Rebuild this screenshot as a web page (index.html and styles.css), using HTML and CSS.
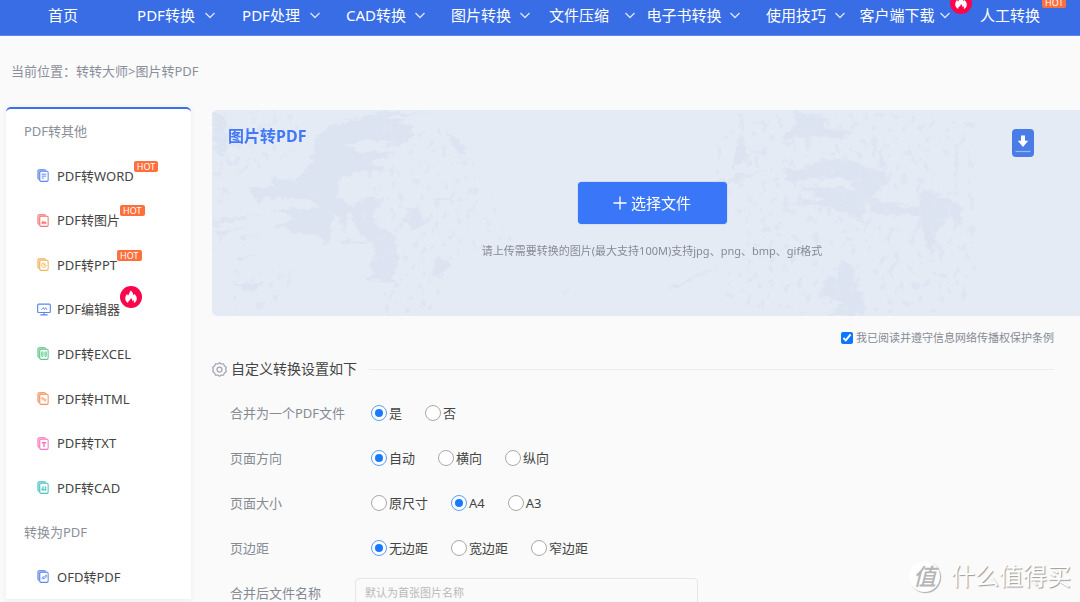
FILE: index.html
```html
<!DOCTYPE html>
<html lang="zh-CN">
<head>
<meta charset="utf-8">
<meta name="viewport" content="width=device-width, initial-scale=1">
<title>图片转PDF - 转转大师</title>
<link rel="stylesheet" href="styles.css">
</head>
<body>
<svg class="defs" aria-hidden="true">
  <symbol id="chevron" viewBox="0 0 12 12"><path d="M1.500 4 6 8.500 10.500 4" fill="none" stroke="currentColor" stroke-width="1.300"/></symbol>
  <symbol id="flame" viewBox="0 0 22 22">
    <circle cx="11" cy="11" r="11" fill="#f9064b"/>
    <path d="M8.200 17C6 15.800 4.800 13.800 5.300 11.200c.3-1.300.9-2.300 1.700-3.200.5.600.8 1.100.9 1.800C9 8.500 9.300 6.500 10.800 4.500c1.600 1 2.400 2.700 2.300 4.800.5-.3.800-.8 1-1.500 1.900 1.500 3 3.500 2.600 5.700-.3 1.700-1.400 2.900-3 3.500.5-1.200.2-2.200-.6-3-.1.700-.4 1-.8 1.200.1-1.400-.3-2.400-1.400-3.200.1 1.600-1.700 2.300-2.500 3.500-.3.600-.3 1-.2 1.500z" fill="#fff"/>
  </symbol>
  <symbol id="pages" viewBox="0 0 36 40">
    <path d="M7 32H6a4 4 0 0 1-4-4V6a4 4 0 0 1 4-4h17a4 4 0 0 1 4 4" fill="currentColor" fill-opacity=".5" stroke="currentColor" stroke-width="3"/>
    <rect x="8" y="7" width="26" height="31" rx="4" fill="#fff" stroke="currentColor" stroke-width="3.500"/>
  </symbol>
</svg>

<nav class="nav">
  <a class="nav-item nav-home" href="#"><span class="nav-label">首页</span></a>
  <a class="nav-item" href="#"><span class="nav-label">PDF转换</span><svg class="chevron"><use href="#chevron"/></svg></a>
  <a class="nav-item" href="#"><span class="nav-label">PDF处理</span><svg class="chevron"><use href="#chevron"/></svg></a>
  <a class="nav-item" href="#"><span class="nav-label">CAD转换</span><svg class="chevron"><use href="#chevron"/></svg></a>
  <a class="nav-item" href="#"><span class="nav-label">图片转换</span><svg class="chevron"><use href="#chevron"/></svg></a>
  <a class="nav-item nav-early" href="#"><span class="nav-label">文件压缩</span><svg class="chevron"><use href="#chevron"/></svg></a>
  <a class="nav-item nav-early" href="#"><span class="nav-label">电子书转换</span><svg class="chevron"><use href="#chevron"/></svg></a>
  <a class="nav-item" href="#"><span class="nav-label">使用技巧</span><svg class="chevron"><use href="#chevron"/></svg></a>
  <a class="nav-item nav-client" href="#"><span class="nav-label">客户端下载</span><svg class="chevron"><use href="#chevron"/></svg><svg class="nav-flame"><use href="#flame"/></svg></a>
  <a class="nav-item nav-last" href="#"><span class="nav-label">人工转换<span class="hot nav-hot">HOT</span></span></a>
</nav>

<div class="crumbs">当前位置：<a href="#">转转大师</a>&gt;<a href="#">图片转PDF</a></div>

<div class="layout">
  <aside class="sidebar">
    <h2 class="side-title">PDF转其他</h2>
    <a class="side-item" href="#"><svg class="side-icon c-blue" viewBox="0 0 36 40"><use href="#pages"/><path d="M14 16h14M14 22h14M14 28h7" stroke="currentColor" stroke-width="3"/></svg><span class="side-label">PDF转WORD<span class="hot side-hot">HOT</span></span></a>
    <a class="side-item" href="#"><svg class="side-icon c-red" viewBox="0 0 36 40"><use href="#pages"/><path d="M13 30v-3l5-7 4 5 3-3 4 5v3z" fill="currentColor"/></svg><span class="side-label">PDF转图片<span class="hot side-hot">HOT</span></span></a>
    <a class="side-item" href="#"><svg class="side-icon c-amber" viewBox="0 0 36 40"><use href="#pages"/><path d="M20.500 15a7 7 0 1 0 7 7h-7zM20.500 22l5-5" fill="none" stroke="currentColor" stroke-width="2.500"/></svg><span class="side-label">PDF转PPT<span class="hot side-hot">HOT</span></span></a>
    <a class="side-item" href="#"><svg class="side-icon side-screen c-blue" viewBox="0 0 42 38"><rect x="2" y="3" width="38" height="25" rx="3" fill="none" stroke="currentColor" stroke-width="3.500"/><path d="M21 28v6M10 35h22" stroke="currentColor" stroke-width="3.500"/><path d="m13 20 6-7 2 5M22 20l4-7 4 7" fill="none" stroke="currentColor" stroke-width="2.500"/></svg><span class="side-label">PDF编辑器<svg class="side-flame"><use href="#flame"/></svg></span></a>
    <a class="side-item" href="#"><svg class="side-icon c-green" viewBox="0 0 36 40"><use href="#pages"/><path d="M14 15h4v14h-4zM24 15h4v14h-4zM14 22h4M24 22h4" fill="none" stroke="currentColor" stroke-width="2.500"/></svg><span class="side-label">PDF转EXCEL</span></a>
    <a class="side-item" href="#"><svg class="side-icon c-orange" viewBox="0 0 36 40"><use href="#pages"/><path d="m19 20-3-4-3 3 4 5 3-2M21 22l3-2 4 5-3 3-4-3M17 19l7 7" fill="none" stroke="currentColor" stroke-width="2.500"/></svg><span class="side-label">PDF转HTML</span></a>
    <a class="side-item" href="#"><svg class="side-icon c-pink" viewBox="0 0 36 40"><use href="#pages"/><path d="M14 18h14M21 18v13" stroke="currentColor" stroke-width="4.500"/></svg><span class="side-label">PDF转TXT</span></a>
    <a class="side-item" href="#"><svg class="side-icon c-teal" viewBox="0 0 36 40"><use href="#pages"/><path d="M13 27h16M18 16v14M25 16v14M18 20l-5 7M25 21h4" fill="none" stroke="currentColor" stroke-width="3"/></svg><span class="side-label">PDF转CAD</span></a>
    <h2 class="side-title">转换为PDF</h2>
    <a class="side-item" href="#"><svg class="side-icon c-blue" viewBox="0 0 36 40"><use href="#pages"/><path d="m14 28 5-8v8l9-6v-7l-6 7" fill="none" stroke="currentColor" stroke-width="2.500"/></svg><span class="side-label">OFD转PDF</span></a>
  </aside>

  <main class="main">
    <section class="upload">
      <svg class="texture" viewBox="0 0 2604 618" preserveAspectRatio="xMinYMin slice" aria-hidden="true">
        <defs>
          <filter id="rough" x="-5%" y="-5%" width="110%" height="110%">
            <feTurbulence type="fractalNoise" baseFrequency=".03 .06" numOctaves="4" seed="4" result="n"/>
            <feDisplacementMap in="SourceGraphic" in2="n" scale="34" xChannelSelector="R" yChannelSelector="G"/>
          </filter>
          <filter id="speckle" x="0" y="0" width="100%" height="100%">
            <feTurbulence type="fractalNoise" baseFrequency=".045 .035" numOctaves="4" seed="9" result="n"/>
            <feColorMatrix in="n" type="matrix" values="0 0 0 0 0  0 0 0 0 0  0 0 0 0 0  14 0 0 0 -8.600" result="t"/>
            <feComposite in="SourceGraphic" in2="t" operator="in"/>
          </filter>
        </defs>
        <g fill="#dde4f1" filter="url(#rough)">
          <g transform="translate(-21 -30)">
            <path d="M330 110 380 75 520 50 625 70 620 110 580 140 560 125 480 120 415 135 470 160 570 155 490 190 555 205 450 220 410 230 400 250 400 290 440 320 480 290 520 290 500 370 560 400 580 470 560 550 490 540 510 470 500 430 460 400 430 330 420 400 400 350 385 345 365 440 335 400 280 400 205 380 270 355 200 330 340 320 330 300 180 290 170 310 140 290 130 260 200 260 200 235 270 240 320 190z"/>
            <path d="M22 30 60 50 70 130 50 180 22 120zM22 362l150-22-70 20-80 12zM22 402l110-24-90 28zM95 410l70-10-60 18zM80 545l100 10-60 20zM100 470l60-8-50 16zM410 424l80-3-10 8-70 2zM1065 580l40-22-30 24zM440 50l230-18-60 12-150 18z"/>
            <path d="m610 320 30 10 20 40-40 20-20-30zM720 90l50 40 20 30-40-10zM690 470l40 20-30 50-15-20zM680 290l100 15-90-4z"/>
          </g>
          <g transform="translate(1284 -30)">
            <path d="M430 200 470 210 520 195 540 180 630 180 680 210 740 215 735 260 690 290 750 310 830 320 850 270 960 310 970 380 920 350 890 400 875 480 850 400 840 345 760 345 700 340 680 300 665 380 640 345 560 320 420 310 560 300 480 260 640 265 640 240 480 235 460 250 440 240z"/>
            <path d="M600 480 640 500 650 560 670 600 670 645 560 645 610 610 545 590 550 540 600 530zM420 110 470 70 460 35 560 50 550 80 640 90 600 120 520 100 430 125zM240 240l140-30-120 45zM300 110l30 60-60 40zM80 570l190-90-160 85zM725 120l12 90-20-10z"/>
          </g>
        </g>
        <g fill="#dfe5f2" filter="url(#speckle)">
          <path d="M0 0h260v130L60 200 0 560zM440 280l80-250 180 20 140 180 60 160-170 80-80 140H520zM60 480h200l-40 130H60zM1500 140l60-130h530l200 30v570h-600l-180-60 100-160-100-180z"/>
        </g>
      </svg>
      <h1 class="upload-title">图片转PDF</h1>
      <a class="download" href="#" aria-label="下载"><svg viewBox="0 0 22 28"><rect width="22" height="28" rx="4" fill="#4a7ce8"/><path d="M9 6.500h4v5.300h3.200L11 18l-5.200-6.200H9z" fill="#fff"/><path d="M3.500 22.500h15" stroke="#9bb7f3" stroke-width="1.200"/></svg></a>
      <div class="upload-body">
        <button class="pick" type="button"><svg viewBox="0 0 14 14"><path d="M7 .5v13M.5 7h13" stroke="#fff" stroke-width="1.300"/></svg>选择文件</button>
        <p class="hint">请上传需要转换的图片(最大支持100M)支持jpg、png、bmp、gif格式</p>
      </div>
    </section>

    <label class="agree"><input type="checkbox" checked>我已阅读并遵守信息网络传播权保护条例</label>

    <form class="settings">
      <h2 class="settings-title">
        <svg viewBox="0 0 30 30"><path d="M15 1.500 18.500 4 23 3.700 24.800 7.800 28.500 10.500 27.500 15 28.500 19.500 24.800 22.200 23 26.300 18.500 26 15 28.500 11.500 26 7 26.300 5.200 22.200 1.500 19.500 2.500 15 1.500 10.500 5.200 7.800 7 3.700 11.500 4z" fill="none" stroke="#a3a6b0" stroke-width="2.500" stroke-linejoin="round"/><circle cx="15" cy="15" r="5" fill="none" stroke="#a3a6b0" stroke-width="2.500"/></svg>
        <span>自定义转换设置如下</span>
      </h2>
      <div class="row" role="radiogroup" aria-labelledby="l-merge">
        <span class="row-label" id="l-merge">合并为一个PDF文件</span>
        <label class="option"><input type="radio" name="merge" checked>是</label>
        <label class="option"><input type="radio" name="merge">否</label>
      </div>
      <div class="row" role="radiogroup" aria-labelledby="l-dir">
        <span class="row-label" id="l-dir">页面方向</span>
        <label class="option"><input type="radio" name="dir" checked>自动</label>
        <label class="option"><input type="radio" name="dir">横向</label>
        <label class="option"><input type="radio" name="dir">纵向</label>
      </div>
      <div class="row" role="radiogroup" aria-labelledby="l-size">
        <span class="row-label" id="l-size">页面大小</span>
        <label class="option"><input type="radio" name="size">原尺寸</label>
        <label class="option"><input type="radio" name="size" checked>A4</label>
        <label class="option"><input type="radio" name="size">A3</label>
      </div>
      <div class="row" role="radiogroup" aria-labelledby="l-margin">
        <span class="row-label" id="l-margin">页边距</span>
        <label class="option"><input type="radio" name="margin" checked>无边距</label>
        <label class="option"><input type="radio" name="margin">宽边距</label>
        <label class="option"><input type="radio" name="margin">窄边距</label>
      </div>
      <div class="row row-name">
        <label class="row-label" for="filename">合并后文件名称</label>
        <input class="filename" id="filename" type="text" placeholder="默认为首张图片名称">
      </div>
    </form>
  </main>
</div>

<div class="watermark"><span class="watermark-seal">值</span><span>什么值得买</span></div>
</body>
</html>
```

FILE: styles.css
```css
* { box-sizing: border-box; }

body {
  margin: 0;
  height: 100vh;
  overflow: hidden;
  position: relative;
  background: #fafafa;
  color: #444;
  font-family: "Noto Sans", "Noto Sans CJK SC", sans-serif;
  font-size: 13px;
  line-height: 18px;
}

a { color: inherit; text-decoration: none; }
h1, h2, p { margin: 0; font-weight: 400; }
.defs { position: absolute; width: 0; height: 0; }

/* top navigation */
.nav {
  display: grid;
  grid-template-columns: 113px repeat(8, 105px) 1fr;
  height: 36px;
  padding-bottom: 6px;
  background: #386de6;
  border-bottom: 1px solid #5c88ee;
  color: #fff;
  font-size: 15px;
}
.nav-item {
  position: relative;
  display: flex;
  align-items: center;
  padding: 0 2px 0 15px;
}
.nav-label {
  position: relative;
  flex: 1;
  min-width: 0;
  display: flex;
  justify-content: center;
  white-space: nowrap;
}
.nav-early .nav-label { padding-right: 14px; }
.nav-client .nav-label { padding-right: 8px; }
.nav-last .nav-label { flex: none; }
.nav-last { padding-left: 27px; }
.chevron { flex: none; width: 12px; height: 12px; color: #dbe6ff; }
.nav-flame {
  position: absolute;
  right: -19px;
  top: -8px;
  width: 22px;
  height: 22px;
}

.hot {
  position: absolute;
  left: 100%;
  padding: 0 3px;
  border-radius: 2px;
  background: #ff6f3c;
  color: #fff;
  font-size: 9px;
  line-height: 11px;
}
.nav-hot { top: -9px; margin-left: 2px; }

.crumbs {
  padding: 26px 11px 27px;
  color: #8b8f9a;
}

/* page columns */
.layout {
  display: grid;
  grid-template-columns: 185px minmax(0, 1fr);
  column-gap: 21px;
  align-items: start;
  padding-left: 6px;
}

.sidebar {
  display: grid;
  grid-auto-rows: 1fr;
  min-height: 493px;
  border-top: 2px solid #3a70ea;
  border-bottom: 1px solid #eef2fa;
  border-radius: 5px 5px 0 0;
  background: #fff;
  box-shadow: 0 0 5px rgba(60, 80, 120, .08);
}
.side-title {
  display: flex;
  align-items: center;
  padding-left: 18px;
  color: #8b8f9a;
  font-size: 13px;
}
.side-item {
  display: grid;
  grid-template-columns: 20px max-content;
  align-items: center;
  padding-left: 31px;
}
.side-label { position: relative; }
.side-icon { width: 12px; height: 13px; }
.side-screen { width: 14px; }
.side-hot { top: -6px; }
.side-flame {
  position: absolute;
  left: 100%;
  top: -14px;
  width: 22px;
  height: 22px;
}

.c-blue { color: #5c88ec; }
.c-red { color: #f77777; }
.c-amber { color: #f3b35a; }
.c-green { color: #5fc88c; }
.c-orange { color: #f3935f; }
.c-pink { color: #fb78bf; }
.c-teal { color: #4cc5c1; }

/* upload panel */
.upload {
  position: relative;
  min-height: 206px;
  margin-top: 3px;
  padding: 16px;
  border-radius: 5px 0 0 5px;
  overflow: hidden;
  background: #e4ebf4;
}
.texture {
  position: absolute;
  inset: 0;
  width: 100%;
  height: 100%;
}
.upload-title {
  position: relative;
  color: #4378f6;
  font-size: 16px;
  line-height: 20px;
  font-weight: 700;
}
.download {
  position: absolute;
  right: 46px;
  top: 19px;
  width: 22px;
  height: 28px;
}
.download svg { display: block; }
.upload-body {
  position: relative;
  display: flex;
  flex-direction: column;
  align-items: center;
  gap: 18px;
  padding: 36px 0 0 12px;
}
.pick {
  display: flex;
  align-items: center;
  justify-content: center;
  gap: 4px;
  width: 149px;
  height: 42px;
  padding: 0;
  border: 0;
  border-radius: 4px;
  background: #3a76f8;
  box-shadow: 0 0 1px #3a76f8;
  color: #fff;
  font: inherit;
  font-size: 15px;
}
.pick svg { width: 14px; height: 14px; }
.hint { color: #868a94; font-size: 11px; }

.agree {
  display: flex;
  align-items: center;
  justify-content: flex-end;
  gap: 3px;
  padding: 13px 26px 0 0;
  color: #868a94;
  font-size: 11px;
}
.agree input {
  width: 12px;
  height: 12px;
  margin: 0;
  accent-color: #0d75ff;
}

/* conversion settings */
.settings { padding: 12px 26px 0 0; }
.settings-title {
  display: flex;
  align-items: center;
  gap: 4px;
  margin-bottom: 11px;
  font-size: 14px;
  line-height: 20px;
}
.settings-title svg { width: 15px; height: 15px; }
.settings-title::after {
  content: "";
  flex: 1;
  height: 1px;
  margin-left: 8px;
  background: #ececec;
}
.row {
  display: flex;
  align-items: center;
  height: 45px;
  padding-left: 18px;
}
.row-label {
  flex: none;
  width: 141px;
  color: #868a94;
}
.option {
  display: flex;
  align-items: center;
  gap: 2px;
  margin-right: 23px;
}
.option input {
  appearance: none;
  display: grid;
  place-items: center;
  width: 16px;
  height: 16px;
  margin: 0;
  border: 1px solid #a9a9a9;
  border-radius: 50%;
  background: #fff;
}
.option input:checked { border-color: #5b9dfb; }
.option input:checked::before {
  content: "";
  width: 8px;
  height: 8px;
  border-radius: 50%;
  background: #187bff;
}
.row-name .row-label { width: 125px; }
.filename {
  width: 343px;
  height: 30px;
  padding: 0 9px;
  border: 1px solid #e6e6e6;
  border-radius: 4px;
  background: #fafafa;
  color: #444;
  font: inherit;
  font-size: 11px;
}
.filename::placeholder { color: #b9b9b9; }

/* corner watermark */
.watermark {
  position: absolute;
  right: 9px;
  bottom: 10px;
  display: flex;
  align-items: center;
  gap: 11px;
  color: #fff;
  font-size: 24px;
  line-height: 32px;
  text-shadow: 1px 1px 1px #999;
}
.watermark-seal {
  width: 31px;
  height: 31px;
  border-radius: 50%;
  background: #fff;
  box-shadow: 1px 1px 1px #aaa;
  color: #b5b5b5;
  font-size: 23px;
  font-weight: 500;
  font-style: italic;
  line-height: 31px;
  text-align: center;
  text-shadow: none;
}
```
